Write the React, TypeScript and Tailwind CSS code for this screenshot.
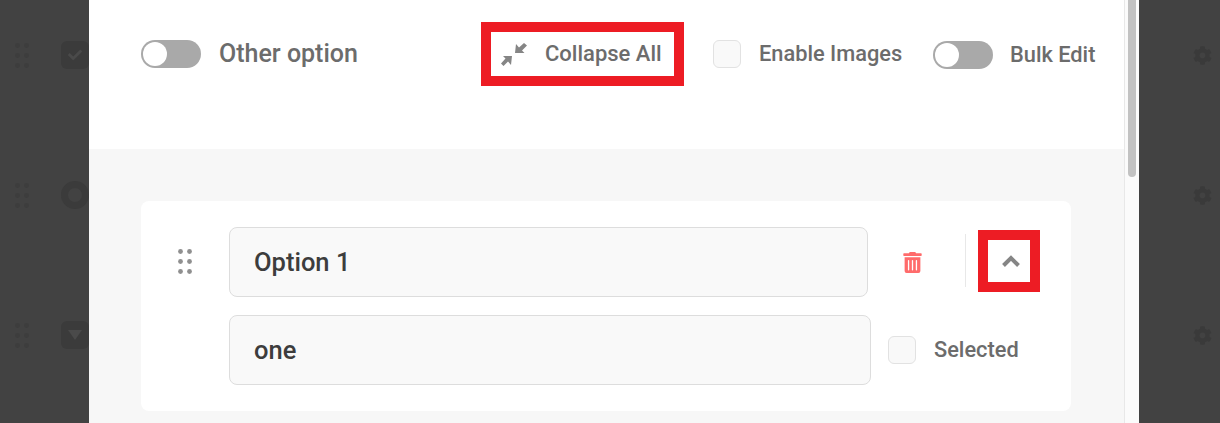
import { FaCheck, FaCog, FaTrashAlt } from "react-icons/fa";
import { ReactNode } from "react";

function DragDots({ className }: { className: string }) {
  return (
    <svg className={className} width="14" height="25" viewBox="0 0 14 25" fill="currentColor">
      {[2.5, 12.5, 22.5].map((cy) => (
        <g key={cy}>
          <circle cx="2.5" cy={cy} r="2.4" />
          <circle cx="11.5" cy={cy} r="2.4" />
        </g>
      ))}
    </svg>
  );
}

function Toggle() {
  return (
    <div className="w-[60px] h-7 rounded-full bg-[#a9a9a9] p-0.5 shrink-0">
      <div className="w-6 h-6 rounded-full bg-white" />
    </div>
  );
}

function Checkbox() {
  return <div className="w-7 h-7 rounded-md border border-[#e2e2e2] bg-[#f9f9f9] shrink-0" />;
}

function BackdropRow({ children }: { children: ReactNode }) {
  return (
    <div className="h-[140px] flex items-center pl-[15px] gap-[32px] shrink-0">
      <DragDots className="text-[#3d3d3d] shrink-0" />
      <div className="w-7 h-7 rounded-md bg-[#3b3b3b] text-[#4a4a4a] flex items-center justify-center shrink-0">
        {children}
      </div>
    </div>
  );
}

export default function App() {
  return (
    <div className="w-[1220px] h-[423px] overflow-hidden flex bg-[#424242] font-['Roboto',sans-serif]">
      {/* dimmed page behind the modal */}
      <div className="w-[89px] shrink-0 overflow-hidden flex flex-col -mt-[15px]">
        <BackdropRow><FaCheck size={14} /></BackdropRow>
        <div className="h-[140px] flex items-center pl-[15px] gap-[32px] shrink-0">
          <DragDots className="text-[#3d3d3d] shrink-0" />
          <div className="w-7 h-7 rounded-full border-[7px] border-[#3b3b3b] shrink-0" />
        </div>
        <BackdropRow>
          <svg width="14" height="10" viewBox="0 0 14 10" fill="currentColor"><path d="M0 0h14L7 10z" /></svg>
        </BackdropRow>
      </div>

      {/* modal */}
      <div className="w-[1050px] shrink-0 flex bg-white">
        <div className="w-[1035px] shrink-0 flex flex-col">
          <div className="h-[149px] shrink-0 flex items-start pl-[52px]">
            <div className="w-[340px] shrink-0 flex items-center mt-[40px]">
              <Toggle />
              <span className="ml-[18px] text-[25px] leading-7 text-[#6c6c6c] font-medium whitespace-nowrap">Other option</span>
            </div>
            <div className="mt-[22px] w-[203px] h-[64px] shrink-0 border-[10px] border-[#ed1c24] flex items-center pl-[10px]">
              <svg width="27" height="25" viewBox="0 0 27 25" fill="#858585" className="shrink-0">
                <path d="M14 11L15 2l3 3.5L23 1l3 2.5-5 5 2.5 2.5z" />
                <path d="M11 14l-1 9-3-3.5L2.5 24 0 21.5l4.5-5L2 14z" />
              </svg>
              <span className="ml-[17px] text-[22px] leading-7 text-[#6c6c6c] font-medium whitespace-nowrap">Collapse All</span>
            </div>
            <div className="w-[220px] shrink-0 flex items-center mt-[40px] ml-[29px]">
              <Checkbox />
              <span className="ml-[18px] text-[21.8px] leading-7 text-[#6c6c6c] font-medium whitespace-nowrap">Enable Images</span>
            </div>
            <div className="flex items-center mt-[41px]">
              <Toggle />
              <span className="ml-[17px] text-[21.8px] leading-7 text-[#6c6c6c] font-medium whitespace-nowrap">Bulk Edit</span>
            </div>
          </div>

          <div className="flex-1 bg-[#f7f7f7] pt-[52px] pl-[52px]">
            <div className="w-[930px] h-[210px] bg-white rounded-lg pt-[26px] pl-[37px] flex items-start">
              <DragDots className="text-[#8f8f8f] mt-[22px] shrink-0" />
              <div className="ml-[37px] flex flex-col gap-[18px]">
                <div className="flex items-center">
                  <div className="w-[639px] h-[70px] rounded-lg border border-[#dddddd] bg-[#f9f9f9] pl-[24px] flex items-center text-[25.5px] font-medium text-[#3d3d3d]">
                    Option 1
                  </div>
                  <FaTrashAlt size={21} className="ml-[34px] text-[#ff6b6b] shrink-0" />
                  <div className="ml-[42px] w-px h-[53px] bg-[#e8e8e8] -mt-[3px]" />
                  <div className="ml-3 w-[62px] h-[62px] border-[10px] border-[#ed1c24] flex items-center justify-center -mt-[3px] shrink-0">
                    <svg width="20" height="14" viewBox="0 0 20 14" fill="none" stroke="#858585" strokeWidth="4" className="ml-[3px]">
                      <path d="M2.5 11.5L10 4l7.5 7.5" />
                    </svg>
                  </div>
                </div>
                <div className="flex items-center">
                  <div className="w-[642px] h-[70px] rounded-lg border border-[#dddddd] bg-[#f9f9f9] pl-[24px] flex items-center text-[25.5px] font-medium text-[#3d3d3d]">
                    one
                  </div>
                  <div className="ml-[17px]"><Checkbox /></div>
                  <span className="ml-[18px] text-[21.8px] leading-7 text-[#6c6c6c] font-medium whitespace-nowrap">Selected</span>
                </div>
              </div>
            </div>
          </div>
        </div>
        {/* scrollbar */}
        <div className="w-[15px] shrink-0 bg-[#fbfbfb] border-l border-[#e8e8e8] pl-[3px]">
          <div className="w-2 h-[177px] bg-[#c2c2c2] rounded-b-md" />
        </div>
      </div>

      <div className="w-[81px] shrink-0 flex flex-col items-start pl-[54px] -mt-[15px]">
        {[0, 1, 2].map((i) => (
          <div key={i} className="h-[140px] flex items-center shrink-0">
            <FaCog size={19} className="text-[#3a3a3a]" />
          </div>
        ))}
      </div>
    </div>
  );
}
